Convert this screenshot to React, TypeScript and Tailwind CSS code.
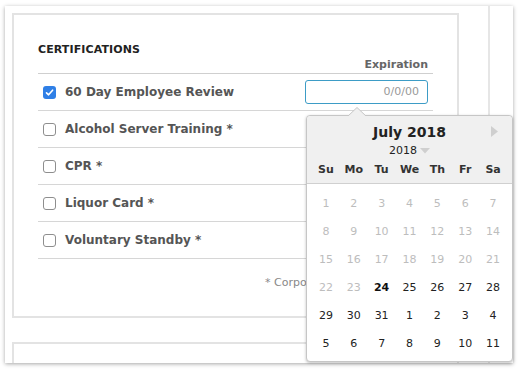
import React from "react";

const rows = [
  { label: "60 Day Employee Review", checked: true },
  { label: "Alcohol Server Training *", checked: false },
  { label: "CPR *", checked: false },
  { label: "Liquor Card *", checked: false },
  { label: "Voluntary Standby *", checked: false },
];

const days: { d: number; t: "past" | "today" | "cur" }[] = [];
for (let i = 1; i <= 23; i++) days.push({ d: i, t: "past" });
days.push({ d: 24, t: "today" });
for (let i = 25; i <= 31; i++) days.push({ d: i, t: "cur" });
for (let i = 1; i <= 11; i++) days.push({ d: i, t: "cur" });

function Checkbox({ checked }: { checked: boolean }) {
  if (checked) {
    return (
      <span className="w-[13px] h-[13px] rounded-[3px] bg-[#2f7fe6] flex items-center justify-center">
        <svg width="9" height="9" viewBox="0 0 9 9">
          <path d="M1.5 4.8 L3.6 6.8 L7.6 2.2" fill="none" stroke="white" strokeWidth="1.6" strokeLinecap="round" strokeLinejoin="round" />
        </svg>
      </span>
    );
  }
  return <span className="w-[13px] h-[13px] rounded-[3px] border border-[#8e8e8e] bg-white" />;
}

export default function App() {
  return (
    <div className="w-[524px] h-[373px] bg-white relative overflow-hidden pl-[5px] pt-[6px]" style={{ fontFamily: '"DejaVu Sans", Verdana, sans-serif' }}>
      <div className="w-[508px] h-[357px] bg-white shadow-[0_1px_4px_rgba(0,0,0,0.35)] flex overflow-hidden">
        <div className="w-[483px] pl-[7px] pt-[7px] flex flex-col">
          <div className="w-[447px] h-[305px] shrink-0 border-2 border-[#e3e3e3] pl-[24px] pr-[24px] pt-[28px]">
            <div className="text-[11px] font-bold text-[#222] leading-[14px] tracking-[0.1px]">CERTIFICATIONS</div>
            <div className="flex justify-end pr-[5px] mt-[1px]">
              <span className="text-[11px] font-bold text-[#666] leading-[14px]">Expiration</span>
            </div>
            <div className="border-t border-[#cfcfcf] mt-[1px]">
              {rows.map((r, i) => (
                <div key={i} className="h-[37px] border-b border-[#d6d6d6] flex items-center pl-[5px] pr-[5px]">
                  <Checkbox checked={r.checked} />
                  <span className="ml-[9px] text-[12px] font-bold text-[#555]">{r.label}</span>
                  {i === 0 && (
                    <div className="ml-auto w-[123px] h-[24px] rounded-[3px] border border-[#3d9cc6] flex items-center justify-end pr-[8px] text-[11px] text-[#999]">
                      0/0/00
                    </div>
                  )}
                </div>
              ))}
            </div>
            <div className="pl-[227px] pt-[16px] text-[11px] text-[#888] whitespace-nowrap">* Corporate required</div>
          </div>
          <div className="w-[447px] mt-[24px] h-[40px] shrink-0 border-2 border-[#e3e3e3]" />
        </div>
        <div className="border-l-2 border-[#e6e6e6] flex-1" />
      </div>

      {/* date picker popover */}
      <div className="absolute left-[306px] top-[115px] w-[207px] h-[247px] rounded-[4px] border border-[#c6c6c6] bg-white shadow-[0_1px_3px_rgba(0,0,0,0.25)]">
        <svg className="absolute left-[40px] -top-[9px]" width="20" height="10" viewBox="0 0 20 10">
          <path d="M0 10 L10 0.5 L20 10" fill="#f0f0f0" stroke="#c6c6c6" strokeWidth="1" />
        </svg>
        <div className="h-[68px] bg-[#f0f0f0] border-b border-[#d0d0d0] rounded-t-[4px] flex flex-col items-center relative">
          <div className="pt-[6px] text-[14px] font-bold text-[#222] leading-[20px]">July 2018</div>
          <svg className="absolute right-[13px] top-[10px]" width="8" height="11" viewBox="0 0 8 11">
            <path d="M0 0 L7 5.5 L0 11 Z" fill="#cfcfcf" />
          </svg>
          <div className="flex items-center text-[11px] text-[#222] leading-[16px] mt-[1px]">
            <span>2018</span>
            <svg className="ml-[3px]" width="10" height="6" viewBox="0 0 10 6">
              <path d="M0 0 L10 0 L5 5.5 Z" fill="#cfcfcf" />
            </svg>
          </div>
          <div className="w-full grid grid-cols-7 px-[5px] mt-[3px] text-[11px] font-semibold text-[#333]">
            {["Su", "Mo", "Tu", "We", "Th", "Fr", "Sa"].map((d) => (
              <div key={d} className="text-center">{d}</div>
            ))}
          </div>
        </div>
        <div className="grid grid-cols-7 px-[5px] pt-[6px]">
          {days.map((x, i) => (
            <div
              key={i}
              className={
                "h-[28px] flex items-center justify-center text-[11px] " +
                (x.t === "past" ? "text-[#bdbdbd]" : x.t === "today" ? "font-bold text-[#111]" : "text-[#222]")
              }
            >
              {x.d}
            </div>
          ))}
        </div>
      </div>
    </div>
  );
}
